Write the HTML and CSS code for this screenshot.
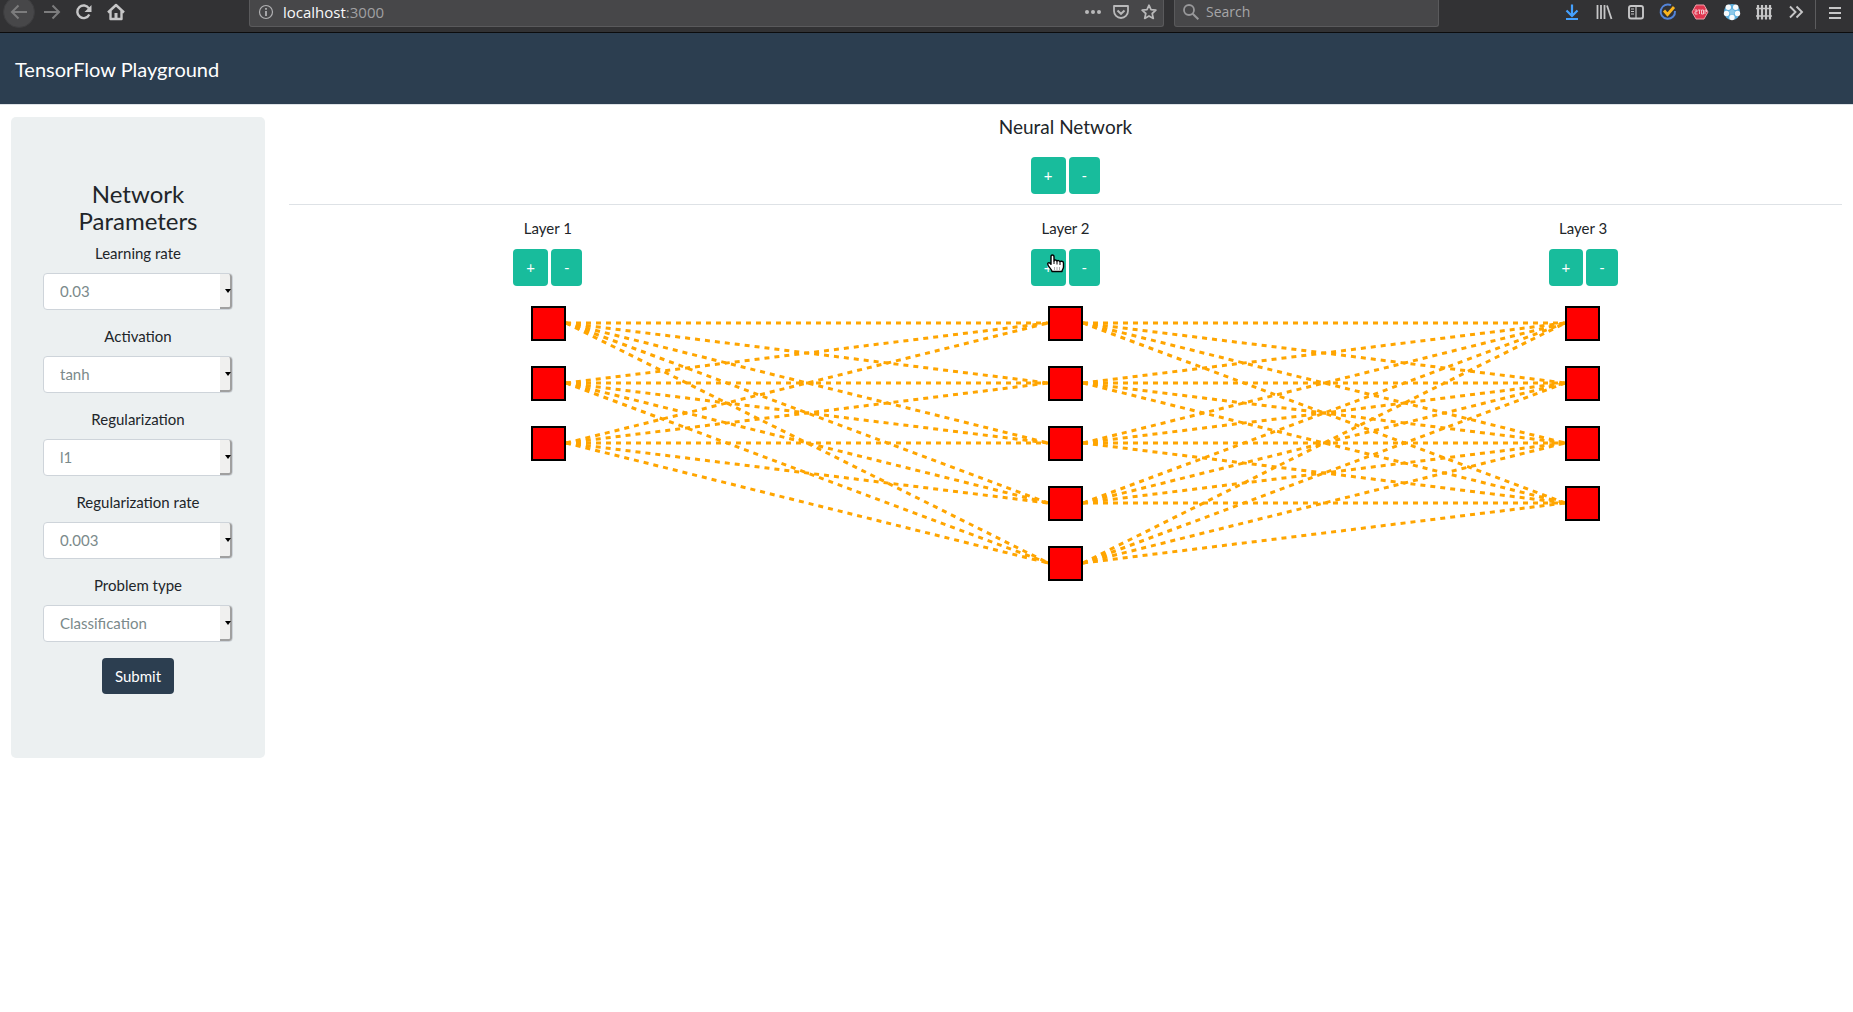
FILE: index.html
```html
<!DOCTYPE html>
<html lang="en">
<head>
<meta charset="utf-8">
<meta name="viewport" content="width=device-width, initial-scale=1">
<title>TensorFlow Playground</title>
<link rel="stylesheet" href="styles.css">
</head>
<body>
<div class="toolbar">
  <div class="tools tools-nav">
    <button class="tool" type="button" aria-label="Back"><svg viewBox="0 0 32 32"><circle cx="16" cy="16" r="15.5" fill="#474749" stroke="#3d3d3f"/><path d="M24 16H9M15.500 9.500L9 16l6.500 6.500" stroke="#7c7c7d" stroke-width="2"/></svg></button>
    <button class="tool" type="button" aria-label="Forward"><svg viewBox="0 0 32 32"><path d="M9 16h15M17.500 9.500L24 16l-6.500 6.500" stroke="#7c7c7d" stroke-width="2"/></svg></button>
    <button class="tool" type="button" aria-label="Reload"><svg viewBox="0 0 32 32"><path d="M22 12.500A6.300 6.300 0 1 0 22.300 18.500" stroke="#c6c6c7" stroke-width="2.400"/><path d="M24.500 9v7h-7z" fill="#c6c6c7"/></svg></button>
    <button class="tool" type="button" aria-label="Home"><svg viewBox="0 0 32 32"><path d="M9 16.500L17 9l8 7.500M11.500 15v8h11v-8" stroke="#c6c6c7" stroke-width="2.400" stroke-linejoin="round"/><path d="M15.500 17h3v6h-3z" fill="#c6c6c7"/></svg></button>
  </div>
  <div class="field address">
    <svg class="glyph" viewBox="0 0 16 16"><circle cx="8" cy="8" r="6.500" stroke="#b1b1b3" stroke-width="1.200"/><path d="M8 7v5M8 4v1.800" stroke="#b1b1b3" stroke-width="1.800"/></svg>
    <div class="url">localhost<span class="port">:3000</span></div>
    <div class="page-actions">
      <svg class="glyph" viewBox="0 0 16 16"><g fill="#b9b9ba"><circle cx="2" cy="8" r="2"/><circle cx="8" cy="8" r="2"/><circle cx="14" cy="8" r="2"/></g></svg>
      <svg class="glyph" viewBox="0 0 16 16"><path d="M1 2h14v5a7 7 0 0 1-14 0z" stroke="#b9b9ba" stroke-width="1.800" stroke-linejoin="round"/><path d="M4.500 6.500L8 9.800l3.500-3.300" stroke="#b9b9ba" stroke-width="2"/></svg>
      <svg class="glyph" viewBox="0 0 16 16"><path d="M8 1.200l2 4.500 4.900.5-3.700 3.300 1.100 4.900L8 11.900l-4.300 2.500 1.100-4.900L1.100 6.200 6 5.700z" stroke="#b9b9ba" stroke-width="1.700" stroke-linejoin="round"/></svg>
    </div>
  </div>
  <div class="field search">
    <svg class="glyph" viewBox="0 0 16 16"><circle cx="6" cy="6" r="5" stroke="#98989a" stroke-width="1.800"/><path d="M9.700 9.700L15.300 15.300" stroke="#98989a" stroke-width="2"/></svg>
    <input class="search-input" type="text" placeholder="Search" aria-label="Search">
  </div>
  <div class="tools tools-ext">
    <button class="tool" type="button" aria-label="Downloads"><svg viewBox="0 0 32 32"><path d="M16 8.500v11M10.500 14.500L16 20l5.500-5.500M10 23h12" stroke="#45a1ff" stroke-width="2.200"/></svg></button>
    <button class="tool" type="button" aria-label="Library"><svg viewBox="0 0 32 32"><path d="M9.500 9v14M13 9v14M16.500 9v14M19 9.500l4.500 13.500" stroke="#c6c6c7" stroke-width="1.800"/></svg></button>
    <button class="tool" type="button" aria-label="Sidebars"><svg viewBox="0 0 32 32"><rect x="9" y="10" width="14" height="12.500" rx="2" stroke="#c6c6c7" stroke-width="1.900"/><path d="M16 10v12.500M11 13h3M11 15.500h3M11 18h3" stroke="#c6c6c7" stroke-width="1.200"/></svg></button>
    <button class="tool" type="button" aria-label="Tasks"><svg viewBox="0 0 32 32"><path d="M19 9.200A7.200 7.200 0 1 0 23 15" stroke="#5384d8" stroke-width="2"/><path d="M12 14.500l3.500 4L22 11" stroke="#fbb51d" stroke-width="2.800"/></svg></button>
    <button class="tool" type="button" aria-label="Blocker"><svg viewBox="0 0 32 32"><path d="M12 9h8l4 7-4 7h-8l-4-7z" fill="#e0364f" stroke="#efa0aa"/><path d="M10.500 14h2.500v1.800h-2v2.200h2.500M14 14h2.500M15.500 14v4M17.500 14h2v4h-2zM21 18v-4h1.500v2" stroke="#f3c5cc"/></svg></button>
    <button class="tool" type="button" aria-label="Football"><svg viewBox="0 0 32 32"><circle cx="16" cy="16" r="8" fill="#5fb0de"/><g fill="#f7fafc"><circle cx="12.300" cy="11.300" r="2.700"/><circle cx="19.700" cy="11.300" r="2.700"/><circle cx="10.500" cy="17.500" r="2.700"/><circle cx="21.500" cy="17.500" r="2.700"/><circle cx="16" cy="21.500" r="2.700"/></g><path d="M16 13l3 2.200-1.100 3.500h-3.800L13 15.200z" fill="#8cc8e8"/></svg></button>
    <button class="tool" type="button" aria-label="Fence"><svg viewBox="0 0 32 32"><path d="M10 9v14.500M14 9v14.500M18 9v14.500M22 9v14.500" stroke="#c6c6c7" stroke-width="2.200"/><path d="M8 12.500h16M8 20h16" stroke="#c6c6c7" stroke-width="1.400"/></svg></button>
    <button class="tool" type="button" aria-label="More tools"><svg viewBox="0 0 32 32"><path d="M10 10.500l5.500 5.500-5.500 5.500M16.500 10.500L22 16l-5.500 5.500" stroke="#c6c6c7" stroke-width="1.900"/></svg></button>
    <button class="tool tool-menu" type="button" aria-label="Menu"><svg viewBox="0 0 32 32"><path d="M10 11h12M10 16h12M10 21h12" stroke="#c6c6c7" stroke-width="2"/></svg></button>
  </div>
</div>

<header class="navbar"><a class="brand" href="#">TensorFlow Playground</a></header>

<div class="page">
  <form class="params">
    <h2 class="params-title">Network Parameters</h2>
    <div class="group">
      <label for="rate">Learning rate</label>
      <div class="select"><select id="rate"><option>0.03</option></select></div>
    </div>
    <div class="group">
      <label for="activation">Activation</label>
      <div class="select"><select id="activation"><option>tanh</option></select></div>
    </div>
    <div class="group">
      <label for="reg">Regularization</label>
      <div class="select"><select id="reg"><option>l1</option></select></div>
    </div>
    <div class="group">
      <label for="regrate">Regularization rate</label>
      <div class="select"><select id="regrate"><option>0.003</option></select></div>
    </div>
    <div class="group">
      <label for="problem">Problem type</label>
      <div class="select"><select id="problem"><option>Classification</option></select></div>
    </div>
    <button class="submit" type="button">Submit</button>
  </form>

  <main class="network">
    <div class="network-head">
      <h1 class="network-title">Neural Network</h1>
      <div class="pair"><button class="btn" type="button">+</button><button class="btn" type="button">-</button></div>
    </div>
    <div class="layers">
      <section class="layer">
        <div class="layer-name">Layer 1</div>
        <div class="pair"><button class="btn" type="button">+</button><button class="btn" type="button">-</button></div>
      </section>
      <section class="layer">
        <div class="layer-name">Layer 2</div>
        <div class="pair"><button class="btn" type="button">+</button><button class="btn" type="button">-</button>
          <svg class="pointer" viewBox="0 0 18 19"><path d="M5.500 1C7 1 7 2 7 3v4c0-1.500 3-1.500 3 .5 0-1.500 3-1.200 3 .7 0-1.500 3.500-1.200 3.500.8v4c0 2-1.500 2.500-1.500 4.500H5c0-2-4.300-5-4.300-7.500 0-1.800 2.300-1.500 3.300.3V3c0-1 0-2 1.500-2z" fill="#fff" stroke="#000" stroke-width="1.400" stroke-linejoin="round"/><path d="M7 7v3M10 8v2.500M13 9v2" stroke="#000"/><path d="M7.500 13v3M10 13v3M12.500 13v3" stroke="#999" stroke-width=".8"/></svg>
        </div>
      </section>
      <section class="layer">
        <div class="layer-name">Layer 3</div>
        <div class="pair"><button class="btn" type="button">+</button><button class="btn" type="button">-</button></div>
      </section>
    </div>
    <div class="graph">
      <div class="nodes"><div class="node"></div><div class="node"></div><div class="node"></div></div>
      <svg class="links">
        <line x1="0" y1="17" x2="100%" y2="17"/><line x1="0" y1="17" x2="100%" y2="77"/><line x1="0" y1="17" x2="100%" y2="137"/><line x1="0" y1="17" x2="100%" y2="197"/><line x1="0" y1="17" x2="100%" y2="257"/>
        <line x1="0" y1="77" x2="100%" y2="17"/><line x1="0" y1="77" x2="100%" y2="77"/><line x1="0" y1="77" x2="100%" y2="137"/><line x1="0" y1="77" x2="100%" y2="197"/><line x1="0" y1="77" x2="100%" y2="257"/>
        <line x1="0" y1="137" x2="100%" y2="17"/><line x1="0" y1="137" x2="100%" y2="77"/><line x1="0" y1="137" x2="100%" y2="137"/><line x1="0" y1="137" x2="100%" y2="197"/><line x1="0" y1="137" x2="100%" y2="257"/>
      </svg>
      <div class="nodes"><div class="node"></div><div class="node"></div><div class="node"></div><div class="node"></div><div class="node"></div></div>
      <svg class="links">
        <line x1="0" y1="17" x2="100%" y2="17"/><line x1="0" y1="17" x2="100%" y2="77"/><line x1="0" y1="17" x2="100%" y2="137"/><line x1="0" y1="17" x2="100%" y2="197"/>
        <line x1="0" y1="77" x2="100%" y2="17"/><line x1="0" y1="77" x2="100%" y2="77"/><line x1="0" y1="77" x2="100%" y2="137"/><line x1="0" y1="77" x2="100%" y2="197"/>
        <line x1="0" y1="137" x2="100%" y2="17"/><line x1="0" y1="137" x2="100%" y2="77"/><line x1="0" y1="137" x2="100%" y2="137"/><line x1="0" y1="137" x2="100%" y2="197"/>
        <line x1="0" y1="197" x2="100%" y2="17"/><line x1="0" y1="197" x2="100%" y2="77"/><line x1="0" y1="197" x2="100%" y2="137"/><line x1="0" y1="197" x2="100%" y2="197"/>
        <line x1="0" y1="257" x2="100%" y2="17"/><line x1="0" y1="257" x2="100%" y2="77"/><line x1="0" y1="257" x2="100%" y2="137"/><line x1="0" y1="257" x2="100%" y2="197"/>
      </svg>
      <div class="nodes"><div class="node"></div><div class="node"></div><div class="node"></div><div class="node"></div></div>
    </div>
  </main>
</div>
</body>
</html>
```
FILE: styles.css
```css
* { box-sizing: border-box; }

body {
  margin: 0;
  background: #fff;
  color: #212529;
  font: 15px/20px Lato, "Liberation Sans", sans-serif;
}

button, select, input { font: inherit; }
button { cursor: pointer; }
svg { fill: none; }

/* browser toolbar */
.toolbar {
  display: flex;
  align-items: flex-start;
  height: 33px;
  overflow: hidden;
  background: #323234;
  border-bottom: 1px solid #0c0c0d;
  font: 14px/24px "Open Sans", "Noto Sans", sans-serif;
}
.tools { display: flex; margin-top: -4px; }
.tools-nav { margin: -4px 118px 0 3px; }
.tools-ext { margin: -4px 2px 0 117px; }
.tool { width: 32px; height: 32px; padding: 0; border: 0; background: none; }
.tool svg { display: block; width: 32px; height: 32px; }
.tool-menu {
  width: 36px;
  height: 33px;
  margin-left: 3px;
  padding-left: 3px;
  border-left: 1px solid #5c5c5e;
}
.field {
  display: flex;
  align-items: center;
  height: 27px;
  padding-bottom: 2px;
  background: #474749;
  border: 1px solid #5a5a5c;
  border-top: 0;
  border-radius: 0 0 3px 3px;
}
.glyph { flex: none; width: 16px; height: 16px; }
.address { flex: 1; padding-left: 8px; padding-right: 6px; }
.url { flex: 1; padding-left: 9px; color: #f9f9fa; font-size: 15px; }
.port { color: #a0a0a2; }
.page-actions { display: flex; gap: 12px; }
.search { width: 265px; margin-left: 10px; padding-left: 8px; }
.search-input {
  flex: 1;
  min-width: 0;
  padding: 0 7px;
  border: 0;
  outline: 0;
  background: none;
  color: #f9f9fa;
}
.search-input::placeholder { color: #a6a6a8; opacity: 1; }

/* header */
.navbar {
  padding: 24px 15px 23px;
  background: #2c3e50;
  border-bottom: 1px solid #dee2e6;
}
.brand {
  display: block;
  color: #fff;
  font-size: 20px;
  line-height: 24px;
  text-decoration: none;
}

.page { display: flex; align-items: flex-start; gap: 24px; padding: 12px 11px; }

/* parameters panel */
.params {
  flex: 0 0 254px;
  padding: 63px 32px 64px;
  background: #ecf0f1;
  border-radius: 5px;
  text-align: center;
}
.params-title { margin: 0 0 9px; font-size: 24px; font-weight: 400; line-height: 27px; }
.group { margin-bottom: 16px; }
.group label { display: block; margin-bottom: 10px; }
.select { position: relative; }
.select select {
  display: block;
  width: 100%;
  height: 37px;
  padding: 0 16px 2px;
  appearance: none;
  background: #fff;
  border: 1px solid #ced4da;
  border-radius: 4px;
  color: #7b8a8b;
}
.select::before {
  content: "";
  position: absolute;
  top: 1px;
  right: 1px;
  bottom: 1px;
  width: 10px;
  background: #f0f0ef;
  border: solid #a0a0a0;
  border-width: 0 2px 2px 0;
  border-radius: 0 3px 3px 0;
  pointer-events: none;
}
.select::after {
  content: "";
  position: absolute;
  top: 16px;
  right: 2px;
  border: solid transparent;
  border-top-color: #000;
  border-width: 4px 3px 0;
  pointer-events: none;
}
.submit {
  display: block;
  height: 36px;
  margin: 0 auto;
  padding: 0 13px 1px;
  border: 0;
  border-radius: 4px;
  background: #2c3e50;
  color: #fff;
}

/* network */
.network { flex: 1; min-width: 0; text-align: center; }
.network-head { padding-bottom: 10px; border-bottom: 1px solid #dee2e6; }
.network-title { margin: 0 0 20px; font-size: 19px; font-weight: 400; line-height: 20px; }
.pair { position: relative; display: flex; justify-content: center; gap: 3px; }
.btn {
  height: 37px;
  padding: 0 13px 2px;
  border: 0;
  border-radius: 4px;
  background: #18bc9c;
  color: #fff;
}
.layers { display: grid; grid-template-columns: repeat(3, 1fr); padding: 13px 0 20px; }
.layer-name { margin-bottom: 11px; }
.pointer { position: absolute; top: 5px; left: calc(50% - 18px); width: 18px; height: 19px; }

.graph { display: flex; align-items: flex-start; padding: 0 calc(100% / 6 - 17px); }
.nodes { display: flex; flex-direction: column; gap: 25px; }
.node { width: 35px; height: 35px; background: #f00; border: 2px solid #000; }
.links {
  flex: 1;
  min-width: 0;
  height: 275px;
  stroke: orange;
  stroke-width: 3;
  stroke-dasharray: 5 5;
}
```
